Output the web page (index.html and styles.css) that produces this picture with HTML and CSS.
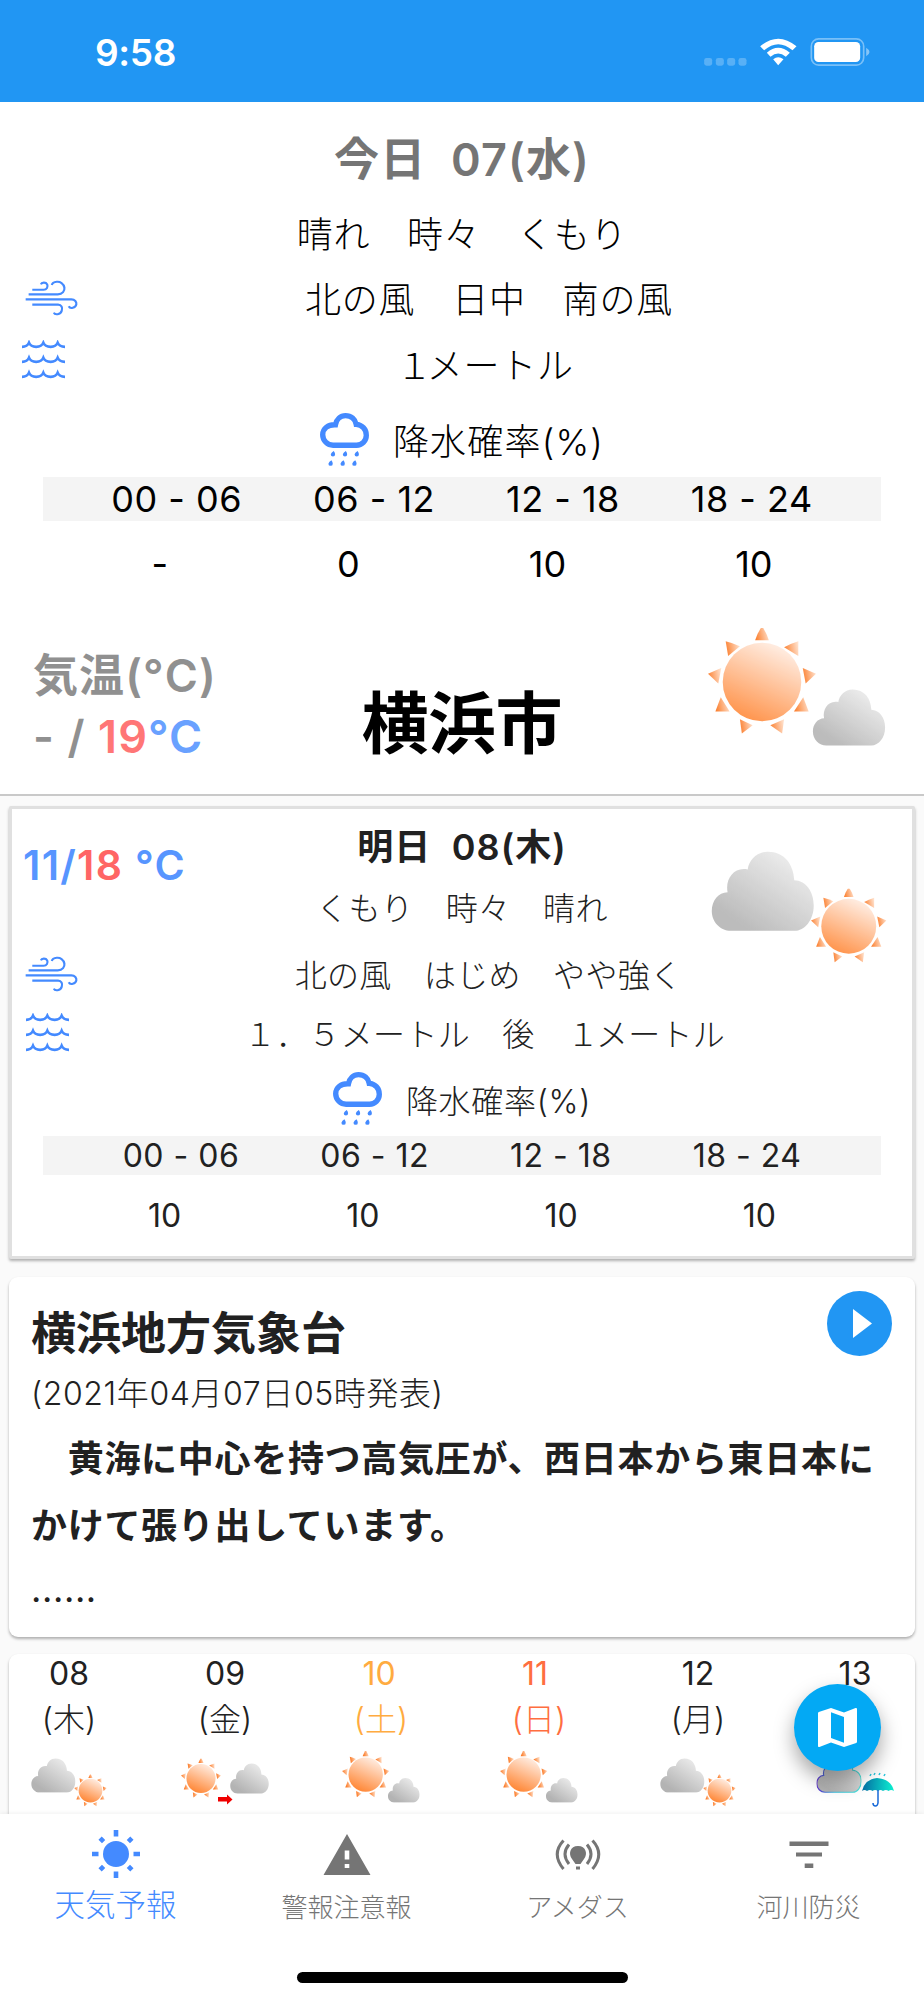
FILE: index.html
```html
<!DOCTYPE html>
<html lang="ja">
  <head>
    <meta charset="UTF-8" />
    <meta name="viewport" content="width=device-width, initial-scale=1.0" />
    <title>天気予報</title>
    <link rel="stylesheet" href="styles.css">
  </head>
  <body>
    <!-- Shared weather symbols -->
    <svg class="sprite" aria-hidden="true">
      <defs>
        <linearGradient id="sunFill" x1="0.3" y1="1" x2="0.75" y2="0">
          <stop offset="0" stop-color="#ff8431" />
          <stop offset="1" stop-color="#fff0e7" />
        </linearGradient>
        <linearGradient id="rayFill" x1="0" y1="0.6" x2="1" y2="0.4">
          <stop offset="0" stop-color="#fb6f14" />
          <stop offset="1" stop-color="#ffdcc4" />
        </linearGradient>
        <linearGradient id="cloudFill" x1="0.2" y1="0.85" x2="0.85" y2="0.1">
          <stop offset="0" stop-color="#b3b3b3" />
          <stop offset="1" stop-color="#ececec" />
        </linearGradient>
        <linearGradient id="rainFill" x1="0" y1="0" x2="1" y2="0">
          <stop offset="0" stop-color="#5b2bd0" />
          <stop offset="0.4" stop-color="#3fc3e0" />
          <stop offset="1" stop-color="#4de0d8" />
        </linearGradient>
        <linearGradient id="umbrellaFill" x1="0" y1="0" x2="1" y2="0">
          <stop offset="0" stop-color="#0670a8" />
          <stop offset="1" stop-color="#0cf0d0" />
        </linearGradient>
        <symbol id="sun" viewBox="-55 -55 110 110">
          <circle r="40" fill="url(#sunFill)" />
          <g fill="url(#rayFill)">
            <path d="M-1.5-54.5Q0-56 1.5-54.5Q5-49 7-42.500H-7Q-5-49-1.5-54.5Z" />
            <path d="M37-41.500V-26.5L22.500-35.5Q29-39 37-41.500Z" />
            <path d="M55-8.5L44.500 1.500 41.500-14.2Z" />
            <path d="M42 15.5L47.500 30 32.500 30Z" />
            <path d="M22.500 38L20.500 52.500 8.500 44Z" />
            <path d="M-22.500 38L-9.5 44-20.5 52.500Z" />
            <path d="M-42 15.5L-33 30-47.500 30Z" />
            <path d="M-55-8.5L-41.500-14.2-44.500 1.500Z" />
            <path d="M-37-41.500Q-29-39.500-22.500-36.5L-34.500-26.5Z" />
          </g>
        </symbol>
        <symbol id="cloud" viewBox="-2 -2 313 244">
          <path d="M58 240C26 240 0 214 0 180C0 148 20 124 48 123C40 85 66 45 109 54C112 25 138 0 170 0C220 0 248 38 250 87C284 88 309 120 309 163C309 207 282 240 250 240Z" />
        </symbol>
        <symbol id="sunCloud" viewBox="0 0 178 128">
          <use href="#sun" width="108" height="108" />
          <use href="#cloud" x="104" y="61" width="74" height="57" fill="url(#cloudFill)" />
        </symbol>
        <symbol id="cloudSun" viewBox="0 0 176 113">
          <use href="#cloud" width="103.500" height="80.500" fill="url(#cloudFill)" />
          <use href="#sun" x="100" y="37.5" width="75.5" height="75.5" />
        </symbol>
        <symbol id="wind" viewBox="76 30 160 108">
          <path d="M98 59H132C142 59 146 50 143 43C139 35 126 36 124 43M87 73H175C190 73 196 62 195 53C193 40 182 34 172 35C164 36 158 40 157 45M78 88H216C227 88 232 96 231 103C229 114 212 118 208 109M98 104H176C186 104 190 114 187 122C183 135 166 136 163 128" fill="none" stroke="#448aff" stroke-width="6.500" />
        </symbol>
        <symbol id="waves" viewBox="66 208 129 116">
          <g fill="none" stroke="#448aff" stroke-width="8">
            <path d="M66 228Q82 228 87 216Q92 228 108.500 228Q125 228 130 216Q135 228 152 228Q168 228 173 216Q178 228 195 228" />
            <path d="M66 273Q82 273 87 261Q92 273 108.500 273Q125 273 130 261Q135 273 152 273Q168 273 173 261Q178 273 195 273" />
            <path d="M66 318Q82 318 87 306Q92 318 108.500 318Q125 318 130 306Q135 318 152 318Q168 318 173 306Q178 318 195 318" />
          </g>
        </symbol>
        <symbol id="rain" viewBox="963 459 146 158">
          <path d="M1002 555C985 555 971 541 971 524C971 505 987 493 1009 494C1012 478 1024 467 1039 467C1056 467 1068 478 1071 493C1088 494 1101 507 1101 525C1101 542 1088 555 1072 555Z" fill="none" stroke="#448aff" stroke-width="16" />
          <g fill="#448aff">
            <path id="drop" d="M1004 572Q1008 577 1008 582A6.500 6.500 0 0 1 995 582Q997 576 1004 572Z" />
            <use href="#drop" x="36" />
            <use href="#drop" x="71" />
            <use href="#drop" x="-7" y="28" />
            <use href="#drop" x="29" y="28" />
            <use href="#drop" x="64" y="28" />
          </g>
        </symbol>
      </defs>
    </svg>

    <div class="app">
      <header class="status-bar">
        <span class="clock">9:58</span>
        <svg class="status-icons" viewBox="72 55 497 84">
          <g fill="#fff" fill-opacity="0.25">
            <rect x="72" y="115" width="24" height="23" rx="7" />
            <rect x="107" y="115" width="24" height="23" rx="7" />
            <rect x="141" y="115" width="24" height="23" rx="7" />
            <rect x="175" y="115" width="24" height="23" rx="7" />
          </g>
          <path d="M240 80Q294 34 349 80L337 92Q294 56 252 92ZM260 99Q294 70 329 99L317 111Q294 92 271 111ZM279 119Q294 106 310 119L294 137Z" fill="#fff" />
          <rect x="393.500" y="57.500" width="157" height="79" rx="22" fill="none" stroke="#fff" stroke-opacity="0.4" stroke-width="5" />
          <rect x="402" y="67" width="138" height="60" rx="13" fill="#fff" />
          <path d="M558 84Q568 90 568 97T558 110Z" fill="#fff" fill-opacity="0.45" />
        </svg>
      </header>

      <main class="forecast">
        <section class="today">
          <h1 class="today-date">今日&nbsp; 07(水)</h1>
          <p class="weather">晴れ　時々　くもり</p>
          <div class="detail wind-row">
            <svg class="wind-icon"><use href="#wind" /></svg>
            <p>北の風　日中　南の風</p>
          </div>
          <div class="detail wave-row">
            <svg class="wave-icon"><use href="#waves" /></svg>
            <p><span class="one">１</span>メートル</p>
          </div>
          <div class="rain-title">
            <svg class="rain-icon"><use href="#rain" /></svg>
            <span>降水確率(%)</span>
          </div>
          <div class="hours">
            <span>00 - 06</span><span>06 - 12</span><span>12 - 18</span><span>18 - 24</span>
          </div>
          <div class="chances">
            <span>-</span><span>0</span><span>10</span><span>10</span>
          </div>
          <div class="today-bottom">
            <div class="temps">
              <div>気温(°C)</div>
              <div>- / <span class="high">19</span><span class="unit">°C</span></div>
            </div>
            <h2 class="city">横浜市</h2>
            <svg class="today-icon"><use href="#sunCloud" /></svg>
          </div>
        </section>

        <section class="card tomorrow">
          <div class="tomorrow-top">
            <div class="tomorrow-temps"><span class="low">11/</span><span class="high">18</span><span class="low"> °C</span></div>
            <div>
              <h2 class="tomorrow-date">明日&nbsp; 08(木)</h2>
              <p class="weather">くもり　時々　晴れ</p>
            </div>
            <svg class="tomorrow-icon"><use href="#cloudSun" /></svg>
          </div>
          <div class="detail wind-row">
            <svg class="wind-icon"><use href="#wind" /></svg>
            <p>北の風　はじめ　やや強く</p>
          </div>
          <div class="detail wave-row">
            <svg class="wave-icon"><use href="#waves" /></svg>
            <p>１．５メートル　後　<span class="one">１</span>メートル</p>
          </div>
          <div class="rain-title">
            <svg class="rain-icon"><use href="#rain" /></svg>
            <span>降水確率(%)</span>
          </div>
          <div class="hours">
            <span>00 - 06</span><span>06 - 12</span><span>12 - 18</span><span>18 - 24</span>
          </div>
          <div class="chances">
            <span>10</span><span>10</span><span>10</span><span>10</span>
          </div>
        </section>

        <section class="card report">
          <div class="report-head">
            <h2>横浜地方気象台</h2>
            <svg class="play" viewBox="0 0 65 65">
              <circle cx="32.500" cy="32.500" r="32.500" fill="#2196f3" />
              <path d="M26 18V47L45 32.500Z" fill="#fff" />
            </svg>
          </div>
          <p class="issued">(2021年04月07日05時発表)</p>
          <p class="summary">　黄海に中心を持つ高気圧が、西日本から東日本にかけて張り出しています。</p>
          <p class="more">......</p>
        </section>

        <section class="card week">
          <div class="day">
            <span class="num">08</span><span class="name">(木)</span>
            <svg class="cloud-sun"><use href="#cloudSun" /></svg>
          </div>
          <div class="day">
            <span class="num">09</span><span class="name">(金)</span>
            <svg class="sun-then-cloud" viewBox="0 0 88 49">
              <use href="#sun" width="40" height="41" />
              <use href="#cloud" x="49" y="5" width="39" height="31" fill="url(#cloudFill)" />
              <path d="M37 39H46V36.500L51.500 41.500 46 46.500V43.500H37Z" fill="#f00000" />
            </svg>
          </div>
          <div class="day saturday">
            <span class="num">10</span><span class="name">(土)</span>
            <svg class="sun-cloud"><use href="#sunCloud" /></svg>
          </div>
          <div class="day sunday">
            <span class="num">11</span><span class="name">(日)</span>
            <svg class="sun-cloud"><use href="#sunCloud" /></svg>
          </div>
          <div class="day">
            <span class="num">12</span><span class="name">(月)</span>
            <svg class="cloud-sun"><use href="#cloudSun" /></svg>
          </div>
          <div class="day">
            <span class="num">13</span><span class="name">(火)</span>
            <svg class="cloud-rain" viewBox="0 0 78 50">
              <use href="#cloud" x="0.500" y="0" width="45" height="36" fill="url(#cloudFill)" stroke="url(#rainFill)" stroke-width="8" />
              <path d="M46 34Q49 22 61 21Q75 22 78 34Q75 32 72.500 34Q70 32 67 34Q64.500 32 62 34Q59 32 56.500 34Q54 32 51 34Q48.500 32 46 34Z" fill="url(#umbrellaFill)" />
              <path d="M62 33V46Q61.500 49 59.500 49Q57 49 57 46" fill="none" stroke="#1769d8" stroke-width="1.500" />
              <path d="M54 19L55 17M58 18L59 16M63 18L64 16M68 19L69 17" stroke="#2cc6dc" stroke-width="1.500" />
            </svg>
          </div>
        </section>
      </main>

      <button class="map-button" aria-label="地図">
        <svg viewBox="3 3 18 18" width="39" height="39">
          <path d="M20.500 3l-.16.03L15 5.100 9 3 3.360 4.900c-.21.07-.36.25-.36.48V20.500c0 .28.22.5.5.5l.16-.03L9 18.900l6 2.100 5.640-1.900c.21-.07.36-.25.36-.48V3.500c0-.28-.22-.5-.5-.5zM15 19l-6-2.110V5l6 2.110V19z" fill="#fff" />
        </svg>
      </button>

      <nav class="tab-bar">
        <a class="tab active">
          <svg viewBox="0 0 48 48">
            <circle cx="24" cy="24" r="13" />
            <path d="M21.700 0h4.600v6.500h-4.600zM21.700 41.500h4.600V48h-4.600zM0 21.700h6.500v4.600H0zM41.500 21.700H48v4.600h-6.500z" />
            <path d="M21.700 1.500h4.600v5h-4.600zM21.700 41.500h4.600v5h-4.600zM1.500 21.700h5v4.600h-5zM41.500 21.700h5v4.600h-5z" transform="rotate(45 24 24)" />
          </svg>
          <span>天気予報</span>
        </a>
        <a class="tab">
          <svg viewBox="0 0 48 48">
            <path d="M24 4L47.500 45H.5ZM21.700 20.500V29.500H26.300V20.500ZM21.700 34V38H26.300V34Z" fill-rule="evenodd" />
          </svg>
          <span>警報注意報</span>
        </a>
        <a class="tab">
          <svg viewBox="0 0 48 48">
            <path d="M24 16C16 16 14 24 18 29L21.500 34H26.500L30 29C34 24 32 16 24 16ZM22 36.500H26V39.500H22Z" />
            <path d="M15 14.500Q7 24 15 34M33 14.500Q41 24 33 34M9.500 10.500Q-3 24 9.500 39M38.500 10.500Q51 24 38.500 39" fill="none" stroke="#757575" stroke-width="3" />
          </svg>
          <span>アメダス</span>
        </a>
        <a class="tab">
          <svg viewBox="0 0 48 48">
            <path d="M4.500 11.500h39v4.500h-39zM11 22.500h26v4h-26zM19.700 33.500h8.600v4.500h-8.600z" />
          </svg>
          <span>河川防災</span>
        </a>
        <div class="home-indicator"></div>
      </nav>
    </div>
  </body>
</html>
```

FILE: styles.css
```css
* {
  box-sizing: border-box;
}

body {
  margin: 0;
  font-family: Inter, "Noto Sans CJK JP", sans-serif;
  color: #212121;
  background-color: #fafafa;
}

h1,
h2,
p {
  margin: 0;
}

svg {
  display: block;
  flex-shrink: 0;
}

.sprite {
  position: absolute;
  width: 0;
  height: 0;
}

.app {
  position: relative;
  display: flex;
  flex-direction: column;
  height: 2000px;
  overflow: hidden;
}

/* Status bar */
.status-bar {
  display: flex;
  align-items: center;
  justify-content: space-between;
  flex-shrink: 0;
  height: 102px;
  padding: 2px 54px 0 95px;
  background-color: #2196f3;
}

.clock {
  color: #fff;
  font-size: 37px;
  font-weight: 600;
  letter-spacing: -0.3px;
}

.status-icons {
  width: 166px;
  height: 28px;
}

.forecast {
  flex: 1;
  min-height: 0;
  overflow: hidden;
}

/* Today */
.today {
  height: 694px;
  padding-top: 21px;
  background-color: #fff;
  border-bottom: 2px solid #c9c9c9;
  color: #000;
  font-size: 36px;
}

.today-date {
  color: #757575;
  font-size: 45px;
  font-weight: 600;
  line-height: 74px;
  letter-spacing: 1.1px;
  text-align: center;
}

.weather {
  font-weight: 300;
  line-height: 77px;
  letter-spacing: 0.7px;
  text-align: center;
}

.detail {
  display: flex;
  align-items: center;
  padding: 0 24px 0 26px;
  font-weight: 300;
}

.detail p {
  flex: 1;
  letter-spacing: 0.8px;
  text-align: center;
}

.wind-row {
  height: 46px;
}

.wave-row {
  height: 85px;
}

.wind-icon {
  width: 53px;
  height: 36px;
  margin: 2px 0 0 -1px;
}

.wave-icon {
  width: 43px;
  height: 39px;
  margin-right: 10px;
}

.today .wave-icon {
  margin: 0 14px 6px -4px;
}

.wave-row p {
  padding-right: 9px;
}

/* Full-width 1 sits closer to the next letter */
.detail .one {
  letter-spacing: -5.5px;
}

.rain-title {
  display: flex;
  align-items: center;
  justify-content: center;
  gap: 24px;
  height: 68px;
  margin-bottom: 4px;
  font-weight: 300;
  letter-spacing: 1.2px;
}

.rain-icon {
  width: 49px;
  height: 53px;
}

.hours {
  display: flex;
  align-items: center;
  justify-content: center;
  gap: 71px;
  height: 44px;
  margin: 0 43px;
  background-color: #f4f4f4;
  letter-spacing: 0.5px;
}

.chances {
  display: flex;
  align-items: center;
  justify-content: center;
  gap: 169px;
  height: 86px;
}

.today-bottom {
  display: grid;
  grid-template-columns: 1fr auto 1fr;
}

.temps {
  padding: 38px 0 0 33px;
  color: #909090;
  font-size: 45px;
  font-weight: 600;
  line-height: 61px;
  letter-spacing: 1.1px;
}

.high {
  color: #ff7676;
}

.unit {
  color: #69a1ff;
}

.city {
  padding-top: 77px;
  font-size: 67px;
  font-weight: 700;
  line-height: 80px;
}

.today-icon {
  justify-self: end;
  width: 178px;
  height: 128px;
  margin: 21px 38px 0 0;
  opacity: 0.88;
}

/* Cards */
.card {
  margin: 0 9px;
  background-color: #fff;
  border-radius: 9px;
  box-shadow: 0 2px 3px rgba(0, 0, 0, 0.3);
}

.tomorrow {
  height: 453px;
  margin-top: 10px;
  padding-top: 7px;
  border: 3px solid #e0e0e0;
  border-radius: 2px;
  font-size: 32px;
}

.tomorrow-top {
  display: grid;
  grid-template-columns: 1fr auto 1fr;
  height: 127px;
}

.tomorrow-temps {
  padding: 18px 0 0 11px;
  font-size: 41px;
  font-weight: 600;
  line-height: 62px;
  letter-spacing: 1.3px;
}

.low {
  color: #5795ff;
}

.tomorrow .high {
  color: #ff6565;
}

.tomorrow-date {
  font-size: 36px;
  font-weight: 600;
  line-height: 62px;
  letter-spacing: 1.1px;
  text-align: center;
}

.tomorrow .weather {
  line-height: 61px;
  letter-spacing: 0.4px;
}

.tomorrow-icon {
  justify-self: end;
  width: 176px;
  height: 113px;
  margin: 35px 25px 0 0;
  opacity: 0.88;
}

.tomorrow .detail {
  padding: 0 13px 0 14px;
}

.tomorrow .detail p {
  letter-spacing: 0.3px;
}

.tomorrow .detail .one {
  letter-spacing: -3px;
}

.tomorrow .wind-row {
  height: 60px;
}

.tomorrow .wave-row {
  height: 58px;
}

.tomorrow .rain-title {
  height: 75px;
  margin-bottom: 0;
  letter-spacing: 0.7px;
}

.tomorrow .hours {
  gap: 81px;
  height: 39px;
  margin: 0 31px;
}

.tomorrow .chances {
  gap: 165px;
  height: 80px;
}

/* Observatory report */
.report {
  height: 360px;
  margin-top: 18px;
  padding: 14px 23px 0 22px;
}

.report-head {
  display: flex;
  justify-content: space-between;
}

.report-head h2 {
  margin-top: 1px;
  font-size: 45px;
  font-weight: 700;
  line-height: 84px;
}

.play {
  width: 65px;
  height: 65px;
}

.issued {
  font-size: 32px;
  font-weight: 300;
  line-height: 36px;
  letter-spacing: 0.6px;
}

.summary {
  margin-top: 14px;
  font-size: 36px;
  font-weight: 700;
  line-height: 67px;
  letter-spacing: 0.7px;
}

.more {
  margin-top: -1px;
  font-size: 36px;
  line-height: 60px;
  letter-spacing: 0.6px;
}

/* Weekly forecast */
.week {
  display: grid;
  grid-template-columns: 156px 156px 156px 160px 158px 156px;
  height: 400px;
  margin-top: 17px;
  font-size: 32px;
}

.day {
  display: flex;
  flex-direction: column;
  align-items: center;
  height: 153px;
  margin-left: -18px;
  margin-right: 18px;
}

.num {
  line-height: 39px;
}

.name {
  font-weight: 300;
  line-height: 54px;
}

.day svg {
  margin-top: auto;
}

.cloud-sun {
  width: 76px;
  height: 49px;
}

.sun-cloud {
  width: 78px;
  height: 56px;
}

.sun-then-cloud {
  width: 88px;
  height: 49px;
}

.cloud-rain {
  width: 78px;
  height: 50px;
}

.saturday {
  color: #ffab40;
}

.saturday .num {
  padding-right: 4px;
}

.sunday {
  color: #ff6e40;
}

.sunday .num {
  padding-right: 8px;
}

/* Floating map button */
.map-button {
  position: absolute;
  right: 43px;
  bottom: 229px;
  display: flex;
  align-items: center;
  justify-content: center;
  width: 87px;
  height: 87px;
  padding: 0;
  border: none;
  border-radius: 50%;
  background-color: #03a9f4;
  box-shadow: 0 10px 20px rgba(0, 0, 0, 0.35);
}

/* Bottom navigation */
.tab-bar {
  position: relative;
  display: grid;
  grid-template-columns: repeat(4, 1fr);
  flex-shrink: 0;
  height: 186px;
  background-color: #fff;
  box-shadow: 0 -1px 4px rgba(0, 0, 0, 0.06);
}

.tab {
  display: flex;
  flex-direction: column;
  align-items: center;
  padding-top: 16px;
  color: #757575;
  fill: #757575;
  font-size: 26px;
  font-weight: 300;
}

.tab svg {
  width: 48px;
  height: 48px;
}

.tab span {
  margin-top: 10px;
  line-height: 40px;
}

.tab.active {
  color: #448aff;
  fill: #448aff;
  font-size: 30.5px;
}

.tab.active span {
  margin-top: 7px;
}

.home-indicator {
  position: absolute;
  left: 297px;
  bottom: 17px;
  width: 331px;
  height: 11px;
  border-radius: 6px;
  background-color: #000;
}
```
